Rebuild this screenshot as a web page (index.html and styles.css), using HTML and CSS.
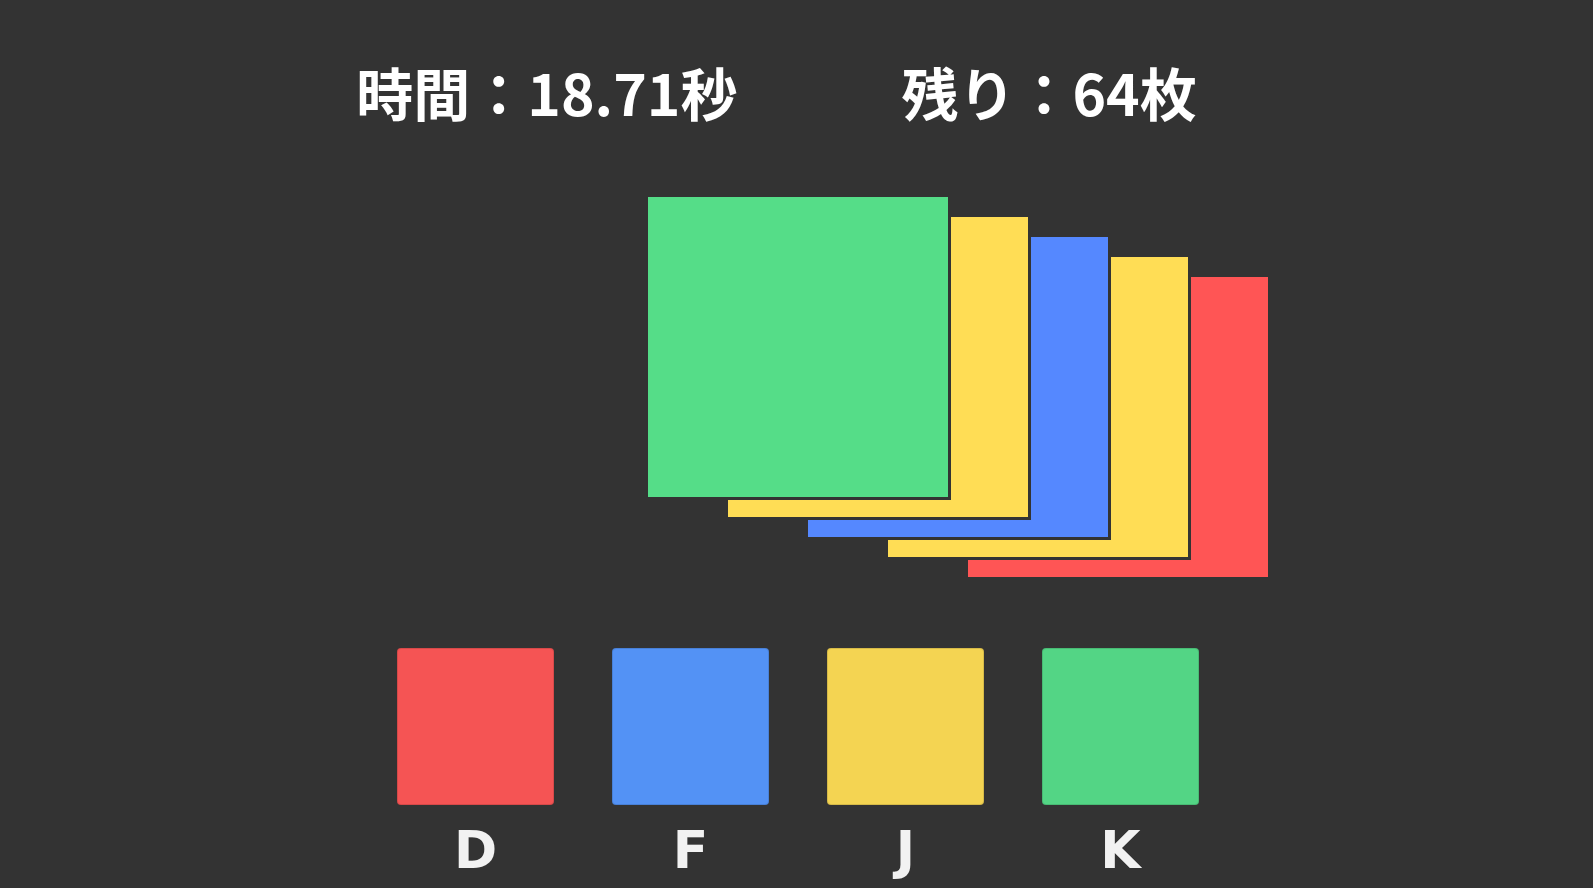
FILE: index.html
```html
<!DOCTYPE html>
<html lang="ja">
<head>
<meta charset="utf-8">
<title>カードゲーム</title>
<link rel="stylesheet" href="styles.css">
</head>
<body>
<main class="game">
  <header class="status">
    <span class="stat">時間：18.71秒</span>
    <span class="stat">残り：64枚</span>
  </header>
  <section class="stage">
    <div class="deck">
      <div class="card green top"></div>
      <div class="card yellow d1"></div>
      <div class="card blue d2"></div>
      <div class="card yellow d3"></div>
      <div class="card red d4"></div>
    </div>
  </section>
  <section class="keys">
    <div class="key">
      <button class="pad pad-red" type="button"></button>
      <span class="label">D</span>
    </div>
    <div class="key">
      <button class="pad pad-blue" type="button"></button>
      <span class="label">F</span>
    </div>
    <div class="key">
      <button class="pad pad-yellow" type="button"></button>
      <span class="label">J</span>
    </div>
    <div class="key">
      <button class="pad pad-green" type="button"></button>
      <span class="label">K</span>
    </div>
  </section>
</main>
</body>
</html>
```
FILE: styles.css
```css
html, body {
  margin: 0;
  padding: 0;
  background: #333333;
  height: 100%;
  overflow: hidden;
}

.game {
  display: flex;
  flex-direction: column;
  padding-left: 3px;
}

.status {
  display: flex;
  justify-content: center;
  gap: 164px;
  padding-top: 55px;
  padding-right: 43px;
  height: 72px;
  font-family: "Noto Sans CJK JP", "Noto Sans", sans-serif;
  font-weight: 700;
  font-size: 57px;
  line-height: 72px;
  color: #ffffff;
  white-space: nowrap;
}

.stage {
  display: flex;
  justify-content: center;
  margin-top: 70px;
}

.deck {
  display: grid;
  grid-template-columns: 300px;
  grid-template-rows: 380px;
}

.card {
  grid-area: 1 / 1;
  width: 300px;
  height: 300px;
  outline: 3px solid #333333;
}

.green { background: #55dd88; }
.yellow { background: #ffdd55; }
.blue { background: #5588ff; }
.red { background: #ff5555; }

.top { z-index: 5; }
.d1 { z-index: 4; margin: 20px 0 0 80px; }
.d2 { z-index: 3; margin: 40px 0 0 160px; }
.d3 { z-index: 2; margin: 60px 0 0 240px; }
.d4 { z-index: 1; margin: 80px 0 0 320px; }

.keys {
  display: flex;
  justify-content: center;
  gap: 58px;
  margin-top: 71px;
}

.key {
  display: flex;
  flex-direction: column;
  align-items: center;
  width: 157px;
}

.pad {
  display: block;
  width: 157px;
  height: 157px;
  margin: 0;
  padding: 0;
  border: 1px solid rgba(0, 0, 0, 0.12);
  border-radius: 4px;
  box-sizing: border-box;
}

.pad-red { background: #f55454; }
.pad-blue { background: #5392f5; }
.pad-yellow { background: #f4d452; }
.pad-green { background: #53d585; }

.label {
  margin-top: 15px;
  font-family: "DejaVu Sans", "Liberation Sans", sans-serif;
  font-weight: 700;
  font-size: 52px;
  line-height: 60px;
  color: #f2f2f2;
}
```
